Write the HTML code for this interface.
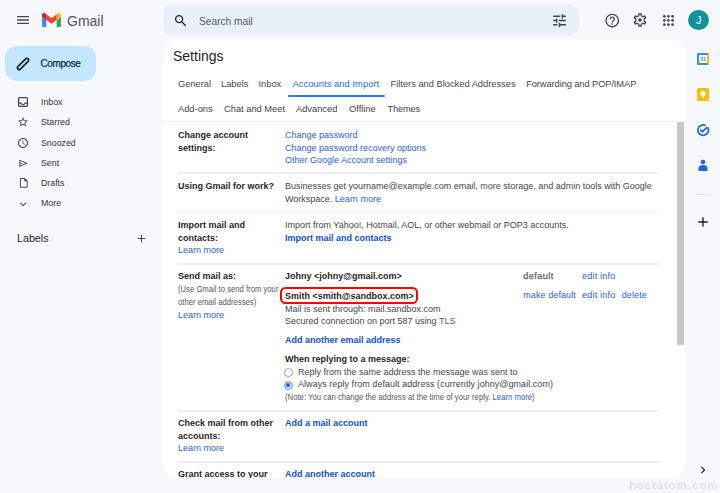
<!DOCTYPE html>
<html><head><meta charset="utf-8">
<style>
*{margin:0;padding:0;box-sizing:border-box}
html,body{width:720px;height:493px;overflow:hidden;background:#f6f8fc;font-family:"Liberation Sans",sans-serif;color:#1f1f1f}
.a{position:absolute;white-space:nowrap}
svg{display:block}
.nav{font-size:8.8px;color:#333639}
.tab{font-size:9.3px;color:#444746;top:79.2px}
.tab2{top:104.2px}
.lbl{font-size:9px;font-weight:bold;color:#1f1f1f;line-height:12.5px}
.txt{font-size:9px;color:#444746;line-height:12.5px}
.lnk{color:#2c62d4}
.lbl.lnk,b.lnk{color:#0f4fcf}
.hr{position:absolute;left:178px;width:481px;height:1.5px;background:#ededed}
</style></head><body>
<!-- header -->
<svg class="a" style="left:15px;top:12px" width="16" height="16" viewBox="0 0 24 24"><path fill="#444746" d="M3 18h18v-2H3v2zm0-5h18v-2H3v2zm0-7v2h18V6H3z"/></svg>
<svg class="a" style="left:41.5px;top:13px" width="19" height="14.2" viewBox="52 42 88 66"><path fill="#4285f4" d="M58 108h14V74L52 59v43c0 3.320 2.690 6 6 6"/><path fill="#34a853" d="M120 108h14c3.32 0 6-2.69 6-6V59l-20 15"/><path fill="#fbbc04" d="M120 48v26l20-15v-8c0-7.42-8.470-11.650-14.400-7.200"/><path fill="#ea4335" d="M72 74V48l24 18 24-18v26L96 92"/><path fill="#c5221f" d="M52 51v8l20 15V48l-5.6-4.2c-5.94-4.45-14.4-.22-14.4 7.2"/></svg>
<div class="a" style="left:67px;top:13px;font-size:14px;color:#505458">Gmail</div>

<div class="a" style="left:163px;top:5px;width:416.3px;height:30.3px;background:#eaf0fa;border-radius:8px"></div>
<svg class="a" style="left:173.1px;top:13.4px" width="15.4" height="15.4" viewBox="0 0 24 24"><path fill="#1f1f1f" d="M15.5 14h-.79l-.28-.27C15.41 12.590 16 11.110 16 9.500 16 5.910 13.090 3 9.500 3S3 5.910 3 9.500 5.910 16 9.500 16c1.610 0 3.090-.590 4.230-1.570l.270.280v.790l5 4.990L20.490 19l-4.990-5zm-6 0C7.010 14 5 11.990 5 9.500S7.010 5 9.500 5 14 7.010 14 9.500 11.990 14 9.500 14z"/></svg>
<div class="a" style="left:199px;top:15.7px;font-size:10.2px;color:#575b5f">Search mail</div>
<svg class="a" style="left:551px;top:12px" width="17" height="17" viewBox="0 0 24 24"><path fill="#444746" d="M3 17v2h6v-2H3zM3 5v2h10V5H3zm10 16v-2h8v-2h-8v-2h-2v6h2zM7 9v2H3v2h4v2h2V9H7zm14 4v-2H11v2h10zm-6-4h2V7h4V5h-4V3h-2v6z"/></svg>
<svg class="a" style="left:603.8px;top:11.8px" width="16.5" height="17" viewBox="0 0 24 24"><path fill="#444746" d="M11 18h2v-2h-2v2zm1-16C6.480 2 2 6.480 2 12s4.480 10 10 10 10-4.480 10-10S17.520 2 12 2zm0 18c-4.410 0-8-3.590-8-8s3.590-8 8-8 8 3.590 8 8-3.590 8-8 8zm0-14c-2.210 0-4 1.790-4 4h2c0-1.100.9-2 2-2s2 .9 2 2c0 2-3 1.750-3 5h2c0-2.250 3-2.500 3-5 0-2.210-1.790-4-4-4z"/></svg>
<svg class="a" style="left:632.2px;top:12.25px" width="16" height="16" viewBox="0 0 24 24"><path fill="#444746" d="M19.43 12.98c.04-.32.07-.64.07-.98 0-.34-.03-.66-.07-.98l2.11-1.65c.19-.15.24-.42.12-.64l-2-3.46c-.09-.16-.26-.25-.44-.25-.06 0-.12.01-.17.03l-2.49 1c-.52-.4-1.08-.73-1.69-.98l-.38-2.65C14.46 2.18 14.25 2 14 2h-4c-.25 0-.46.18-.49.42l-.38 2.65c-.61.25-1.17.59-1.69.98l-2.49-1c-.06-.02-.12-.03-.18-.03-.17 0-.34.09-.43.25l-2 3.46c-.13.22-.07.49.12.64l2.11 1.65c-.04.32-.07.65-.07.98 0 .33.03.66.07.98l-2.11 1.65c-.19.15-.24.42-.12.64l2 3.46c.09.16.26.25.44.25.06 0 .12-.01.17-.03l2.49-1c.52.4 1.08.73 1.690.98l.38 2.65c.03.24.24.42.49.42h4c.25 0 .46-.18.49-.42l.38-2.65c.61-.25 1.17-.59 1.69-.98l2.49 1c.06.02.12.03.18.03.17 0 .34-.09.43-.25l2-3.46c.12-.22.07-.49-.12-.64l-2.11-1.65zm-1.98-1.71c.04.31.05.52.05.73 0 .21-.02.43-.05.73l-.14 1.13.89.7 1.08.84-.7 1.21-1.27-.51-1.04-.42-.9.68c-.43.32-.84.56-1.25.73l-1.06.43-.16 1.13-.2 1.35h-1.4l-.19-1.35-.16-1.13-1.06-.43c-.43-.18-.83-.41-1.23-.71l-.91-.7-1.06.43-1.27.51-.7-1.21 1.08-.84.89-.7-.14-1.13c-.03-.31-.05-.54-.05-.74s.02-.43.05-.73l.14-1.13-.89-.7-1.08-.84.7-1.21 1.27.51 1.04.42.9-.68c.43-.32.84-.56 1.25-.73l1.06-.43.16-1.130.2-1.35h1.39l.19 1.35.16 1.13 1.06.43c.43.18.83.41 1.23.71l.91.7 1.06-.43 1.27-.51.7 1.21-1.07.85-.89.7.14 1.13zM12 9.2a2.8 2.8 0 1 0 0 5.6a2.8 2.8 0 1 0 0-5.6z"/></svg>
<svg class="a" style="left:662.6px;top:15px" width="11" height="11" viewBox="0 0 11 11"><g fill="#444746"><circle cx="1.35" cy="1.35" r="1.35"/><circle cx="5.45" cy="1.35" r="1.35"/><circle cx="9.55" cy="1.35" r="1.35"/><circle cx="1.35" cy="5.45" r="1.35"/><circle cx="5.45" cy="5.45" r="1.35"/><circle cx="9.55" cy="5.45" r="1.35"/><circle cx="1.35" cy="9.55" r="1.35"/><circle cx="5.45" cy="9.55" r="1.35"/><circle cx="9.55" cy="9.55" r="1.35"/></g></svg>
<div class="a" style="left:688.3px;top:9.7px;width:20.8px;height:20.8px;border-radius:50%;background:#12939a;box-shadow:0 0 0 1.6px #fff;color:#fff;font-size:11px;text-align:center;line-height:20.8px">J</div>

<!-- sidebar -->
<div class="a" style="left:5px;top:46px;width:91px;height:35px;border-radius:12px;background:#c2e7ff"></div>
<svg class="a" style="left:16px;top:57px" width="14" height="14" viewBox="0 0 14 14"><rect x="-7.2" y="-1.75" width="14.4" height="3.5" rx="1.75" transform="translate(7 7) rotate(-45)" fill="none" stroke="#1f1f1f" stroke-width="1.7"/></svg>
<div class="a" style="left:40.5px;top:58px;font-size:10px;-webkit-text-stroke:0.2px #0a2640;letter-spacing:-0.4px;color:#0a2640">Compose</div>

<svg class="a" style="left:17px;top:96px" width="12" height="12" viewBox="0 0 12 12"><rect x="1.6" y="1.6" width="8.8" height="8.8" rx="1.2" fill="none" stroke="#444746" stroke-width="1.3"/><path d="M1.6 7.2h2.4c.3 1 1 1.5 2 1.5s1.7-.5 2-1.5h2.4" fill="none" stroke="#444746" stroke-width="1.2"/></svg>
<div class="a nav" style="left:41px;top:97px">Inbox</div>
<svg class="a" style="left:17px;top:116px" width="12" height="12" viewBox="0 0 24 24"><path fill="#444746" d="M22 9.24l-7.19-.62L12 2 9.19 8.63 2 9.24l5.46 4.73L5.82 21 12 17.27 18.18 21l-1.630-7.030L22 9.24zM12 15.4l-3.76 2.27 1-4.28-3.32-2.88 4.38-.38L12 6.1l1.71 4.04 4.38.38-3.32 2.88 1 4.28L12 15.4z"/></svg>
<div class="a nav" style="left:41px;top:116.8px">Starred</div>
<svg class="a" style="left:17.2px;top:137.1px" width="12" height="12" viewBox="0 0 24 24"><path fill="#444746" d="M11.99 2C6.47 2 2 6.48 2 12s4.47 10 9.99 10C17.52 22 22 17.52 22 12S17.52 2 11.99 2zM12 20c-4.42 0-8-3.58-8-8s3.58-8 8-8 8 3.58 8 8-3.58 8-8 8zm.5-13H11v6l5.25 3.15.75-1.23-4.5-2.67z"/></svg>
<div class="a nav" style="left:41px;top:137.7px">Snoozed</div>
<svg class="a" style="left:17.6px;top:157.7px" width="10.7" height="10.7" viewBox="0 0 24 24"><path fill="#444746" d="M3 20V4l19 8L3 20zm2-3l11.85-5L5 7v3.5l6 1.5-6 1.5V17z"/></svg>
<div class="a nav" style="left:41px;top:157.6px">Sent</div>
<svg class="a" style="left:17.5px;top:177.4px" width="11.6" height="11.6" viewBox="0 0 24 24"><path fill="#444746" d="M14 2H6c-1.1 0-1.99.9-1.99 2L4 20c0 1.1.89 2 1.99 2H18c1.1 0 2-.9 2-2V8l-6-6zM6 20V4h7v5h5v11H6z"/></svg>
<div class="a nav" style="left:41px;top:177.9px">Drafts</div>
<svg class="a" style="left:17px;top:197.6px" width="12.4" height="12.4" viewBox="0 0 24 24"><path fill="#444746" d="M16.59 8.59L12 13.17 7.41 8.59 6 10l6 6 6-6z"/></svg>
<div class="a nav" style="left:41px;top:198.3px">More</div>
<div class="a" style="left:17px;top:231.5px;font-size:10.7px;color:#1f1f1f">Labels</div>
<svg class="a" style="left:134.8px;top:231.5px" width="13" height="13" viewBox="0 0 24 24"><path fill="#444746" d="M19 13h-6v6h-2v-6H5v-2h6V5h2v6h6v2z"/></svg>

<!-- right rail -->
<div class="a" style="left:697px;top:53px;width:12px;height:12px;border-radius:1.5px;background:#fff;border-top:2.5px solid #4285f4;border-left:2.5px solid #4285f4;border-bottom:2.5px solid #34a853;border-right:2.5px solid #fbbc04"></div>
<div class="a" style="left:700px;top:56px;font-size:5.5px;color:#4285f4;font-weight:bold;line-height:6px">31</div>
<div class="a" style="left:697px;top:88px;width:12px;height:12.5px;border-radius:1.5px;background:#fbbc04"></div>
<svg class="a" style="left:697px;top:88px" width="12" height="12.5" viewBox="0 0 12 12.5"><circle cx="6" cy="5.5" r="2.6" fill="#fff"/><rect x="5" y="7.5" width="2" height="2" fill="#fff"/></svg>
<svg class="a" style="left:696px;top:123px" width="14" height="14" viewBox="0 0 24 24"><path fill="none" stroke="#1b66d9" stroke-width="3" d="M20 7.5A9 9 0 1 1 16.5 4.2"/><path fill="none" stroke="#1b66d9" stroke-width="3" d="M7.5 11.5l3.5 3.5 8-8"/></svg>
<svg class="a" style="left:697px;top:159px" width="12" height="12" viewBox="0 0 12 12"><circle cx="6" cy="3" r="2.3" fill="#1b66d9"/><path d="M1.5 12V9c0-1.5 1.5-3 4.5-3s4.5 1.5 4.5 3v3z" fill="#1b66d9"/></svg>
<div class="a" style="left:696px;top:193.5px;width:13px;height:1px;background:#dadce0"></div>
<svg class="a" style="left:695px;top:214px" width="16" height="16" viewBox="0 0 24 24"><path fill="#1f1f1f" d="M19 13h-6v6h-2v-6H5v-2h6V5h2v6h6v2z"/></svg>
<svg class="a" style="left:695.5px;top:462.7px" width="14" height="14" viewBox="0 0 24 24"><path fill="#1f1f1f" d="M10 6L8.59 7.41 13.17 12l-4.58 4.59L10 18l6-6z"/></svg>

<!-- main panel -->
<div class="a" style="left:163px;top:40.3px;width:521.6px;height:437.6px;background:#fff;border-radius:11px;overflow:hidden">
</div>
<div class="a" style="left:173px;top:48.3px;font-size:14px;color:#1f1f1f">Settings</div>
<div class="a tab" style="left:178px">General</div>
<div class="a tab" style="left:221px">Labels</div>
<div class="a tab" style="left:258.5px">Inbox</div>
<div class="a tab" style="left:292.5px;color:#2a6ae0;letter-spacing:0.08px">Accounts and Import</div>
<div class="a" style="left:287.5px;top:95px;width:97px;height:2px;background:#3078ea;border-radius:1px"></div>
<div class="a tab" style="left:390.5px">Filters and Blocked Addresses</div>
<div class="a tab" style="left:526.2px;letter-spacing:-0.09px">Forwarding and POP/IMAP</div>
<div class="a tab tab2" style="left:178px">Add-ons</div>
<div class="a tab tab2" style="left:224px">Chat and Meet</div>
<div class="a tab tab2" style="left:296px">Advanced</div>
<div class="a tab tab2" style="left:349px">Offline</div>
<div class="a tab tab2" style="left:387.5px;letter-spacing:-0.2px">Themes</div>
<div class="a" style="left:163px;top:120.9px;width:514px;height:1.5px;background:#f1f2f3"></div>
<div class="a" style="left:677px;top:122px;width:7px;height:223px;background:#c8c8c8"></div>

<div class="a" style="left:163px;top:122px;width:514px;height:356px;overflow:hidden">
<div style="position:absolute;left:-163px;top:-122px;width:720px;height:493px">
<div class="a lbl" style="left:178px;top:129px">Change account<br>settings:</div>
<div class="a txt lnk" style="left:285px;top:129px">Change password<br>Change password recovery options<br>Other Google Account settings</div>
<div class="hr" style="top:172.25px"></div>
<div class="a lbl" style="left:178px;top:180px">Using Gmail for work?</div>
<div class="a txt" style="left:285px;top:180px">Businesses get yourname@example.com email, more storage, and admin tools with Google<br>Workspace. <span class="lnk">Learn more</span></div>
<div class="hr" style="top:211.75px"></div>
<div class="a lbl" style="left:178px;top:219px">Import mail and<br>contacts:<br><span class="lnk" style="font-weight:normal">Learn more</span></div>
<div class="a txt" style="left:285px;top:219px">Import from Yahoo!, Hotmail, AOL, or other webmail or POP3 accounts.<br><b class="lnk">Import mail and contacts</b></div>
<div class="hr" style="top:263.25px"></div>
<div class="a lbl" style="left:178px;top:270px">Send mail as:</div>
<div class="a txt" style="left:178px;top:283px;font-size:8.6px;line-height:13.3px;transform:scaleX(0.895);transform-origin:0 0;color:#55595d">(Use Gmail to send from your<br>other email addresses)</div>
<div class="a txt lnk" style="left:178px;top:309px">Learn more</div>
<div class="a lbl" style="left:285px;top:270px">Johny &lt;johny@gmail.com&gt;</div>
<div class="a" style="left:280px;top:287px;width:137.5px;height:17.3px;border:2px solid #ff0000;border-radius:5.5px"></div>
<div class="a lbl" style="left:285px;top:289.7px">Smith &lt;smith@sandbox.com&gt;</div>
<div class="a txt" style="left:285px;top:302.6px">Mail is sent through: mail.sandbox.com<br>Secured connection on port 587 using <span class="lnk">TLS</span></div>
<div class="a lbl lnk" style="left:285px;top:333.8px">Add another email address</div>
<div class="a lbl" style="left:285px;top:353px">When replying to a message:</div>
<div class="a" style="left:284.1px;top:368.1px;width:8.7px;height:8.7px;border:1.1px solid #9aa0a6;border-radius:50%"></div>
<div class="a txt" style="left:298px;top:366px">Reply from the same address the message was sent to</div>
<div class="a" style="left:284.1px;top:381px;width:8.7px;height:8.7px;border:1.4px solid #5f9af6;border-radius:50%;background:#cfe0fc"><div style="position:absolute;left:1.05px;top:1.05px;width:3.8px;height:3.8px;border-radius:50%;background:#1a5ef0"></div></div>
<div class="a txt" style="left:298px;top:378px;letter-spacing:0.045px">Always reply from default address (currently johny@gmail.com)</div>
<div class="a txt" style="left:285px;top:391.2px;font-size:8.6px;transform:scaleX(0.9);transform-origin:0 0;color:#55595d">(Note: You can change the address at the time of your reply. <span class="lnk">Learn more</span>)</div>
<div class="a" style="left:523.3px;top:270px;font-size:9.2px;-webkit-text-stroke:0.25px #5f6368;color:#5f6368;line-height:12.5px;letter-spacing:0.4px">default</div>
<div class="a txt lnk" style="left:582px;top:270px;letter-spacing:0.22px">edit info</div>
<div class="a txt lnk" style="left:523.3px;top:289px;letter-spacing:0.08px">make default</div>
<div class="a txt lnk" style="left:582px;top:289px;letter-spacing:0.22px">edit info</div>
<div class="a txt lnk" style="left:621.7px;top:289px;letter-spacing:0.12px">delete</div>
<div class="hr" style="top:410.25px"></div>
<div class="a lbl" style="left:178px;top:417px">Check mail from other<br>accounts:<br><span class="lnk" style="font-weight:normal">Learn more</span></div>
<div class="a lbl lnk" style="left:285px;top:417px">Add a mail account</div>
<div class="hr" style="top:461.25px"></div>
<div class="a lbl" style="left:178px;top:468px">Grant access to your</div>
<div class="a lbl lnk" style="left:285px;top:468px">Add another account</div>
</div></div>
<div class="a" style="left:629.4px;top:478.6px;font-size:11.5px;color:#e0e1e4;-webkit-text-stroke:0.3px #e0e1e4;letter-spacing:1.4px">hostatom.com</div>
</body></html>
